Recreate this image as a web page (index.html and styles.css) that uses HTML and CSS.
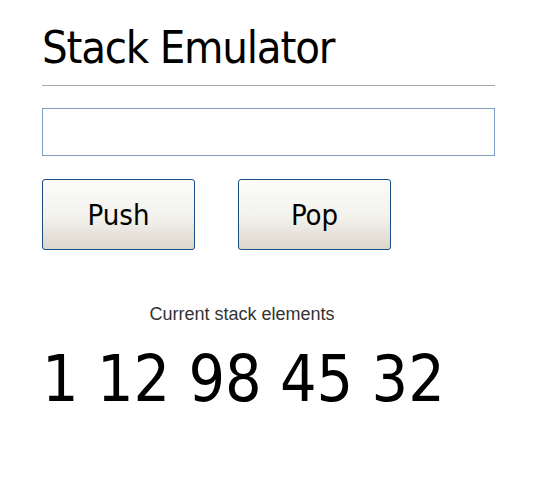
FILE: index.html
```html
<!DOCTYPE html>
<html>
<head>
<meta charset="utf-8">
<link rel="stylesheet" href="styles.css">
</head>
<body>
<main class="app">
  <h1 class="title">Stack Emulator</h1>
  <hr class="rule">
  <input class="field" type="text">
  <div class="actions">
    <button class="btn">Push</button>
    <button class="btn">Pop</button>
  </div>
  <p class="label">Current stack elements</p>
  <div class="stack">1 12 98 45 32</div>
</main>
</body>
</html>
```
FILE: styles.css
```css
html, body {
  margin: 0;
  padding: 0;
  background: #fff;
}
.app {
  padding: 21px 0 0 42px;
  width: 453px;
  font-family: "DejaVu Sans Condensed", "DejaVu Sans", sans-serif;
}
.title {
  margin: 0;
  font-size: 45px;
  font-weight: normal;
  line-height: 54px;
  letter-spacing: -1.2px;
  color: #000;
}
.rule {
  margin: 10px 0 0 0;
  border: 0;
  height: 1px;
  background: #a9a89f;
}
.field {
  display: block;
  box-sizing: border-box;
  margin-top: 22px;
  width: 453px;
  height: 48px;
  border: 1px solid #7d9ec0;
  background: #fff;
  padding: 0 6px;
}
.actions {
  display: flex;
  gap: 43px;
  margin-top: 23px;
}
.btn {
  box-sizing: border-box;
  width: 153px;
  height: 71px;
  border: 1px solid #1c4c84;
  border-radius: 3px;
  background: linear-gradient(#fcfcfb 0%, #f2f1ec 55%, #dcd6cc 100%);
  font-family: "DejaVu Sans Condensed", "DejaVu Sans", sans-serif;
  font-size: 29px;
  color: #000;
  padding: 0;
}
.label {
  width: 400px;
  margin: 54px 0 0 0;
  text-align: center;
  font-family: "Liberation Sans", Arial, sans-serif;
  font-size: 18px;
  color: #333;
}
.stack {
  margin-top: 14px;
  font-size: 64px;
  line-height: 80px;
  color: #000;
}
```
